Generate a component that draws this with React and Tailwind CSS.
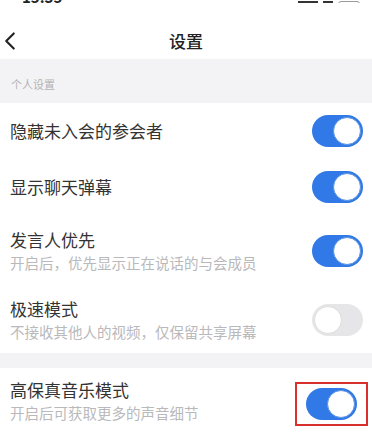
import { ChevronLeft } from 'lucide-react';

const font = { fontFamily: '"Noto Sans CJK SC", "Noto Sans", sans-serif' };

function Toggle({ on }) {
  return (
    <div
      className={`w-[51px] h-[32px] rounded-full flex items-center p-[2px] ${on ? 'bg-[#3079e6] justify-end' : 'bg-[#e6e6e8] justify-start'}`}
    >
      <div className={`w-[28px] h-[28px] rounded-full bg-white ${on ? 'border border-[#5d93e6]' : 'border border-[#dcdcdc]'}`} />
    </div>
  );
}

function Row({ title, sub, on, h, boxed }) {
  return (
    <div className={`flex items-center justify-between pl-[10px] pr-[9px] ${h}`}>
      <div className="flex flex-col">
        <span className="text-[17px] leading-[22px] text-[#333]">{title}</span>
        {sub && <span className="text-[14.5px] leading-[20px] mt-[2px] text-[#b9b9bb]">{sub}</span>}
      </div>
      {boxed ? (
        <div className="border-2 border-[#d8302a] px-[9px] py-[4px] -mr-[5px] mt-[6px]">
          <Toggle on={on} />
        </div>
      ) : (
        <Toggle on={on} />
      )}
    </div>
  );
}

export default function App() {
  return (
    <div className="w-[372px] h-[436px] bg-white overflow-hidden" style={font}>
      {/* status bar, mostly clipped */}
      <div className="h-[22px]">
        <div className="h-[3px] overflow-hidden flex items-end justify-between px-[22px]">
          <span className="text-[15px] leading-none font-bold text-[#222] mb-[-1px]">15:35</span>
          <div className="flex items-end gap-[5px] mb-[-8px] mr-[-10px]">
            <div className="w-[20px] h-[10px] bg-[#333]" />
            <div className="w-[10px] h-[10px] bg-[#333]" />
            <div className="w-[22px] h-[10px] rounded-[3px] border border-[#999]" />
          </div>
        </div>
      </div>

      {/* nav */}
      <div className="h-[38px] flex items-center relative border-b border-[#f3f3f3]">
        <ChevronLeft className="absolute left-[-5px] text-[#222]" size={30} strokeWidth={1.7} />
        <span className="mx-auto text-[17px] font-medium text-[#222]">设置</span>
      </div>

      {/* section header */}
      <div className="h-[43px] bg-[#f3f3f5] pt-[17px] pl-[11px]">
        <span className="text-[11px] leading-[14px] text-[#b3b3b6] block">个人设置</span>
      </div>

      <Row title="隐藏未入会的参会者" on h="h-[56px]" />
      <Row title="显示聊天弹幕" on h="h-[56px]" />
      <Row title="发言人优先" sub="开启后，优先显示正在说话的与会成员" on h="h-[72px]" />
      <Row title="极速模式" sub="不接收其他人的视频，仅保留共享屏幕" on={false} h="h-[66px]" />

      <div className="h-[15px] bg-[#f3f3f5]" />

      <Row title="高保真音乐模式" sub="开启后可获取更多的声音细节" on h="h-[66px]" boxed />
    </div>
  );
}
